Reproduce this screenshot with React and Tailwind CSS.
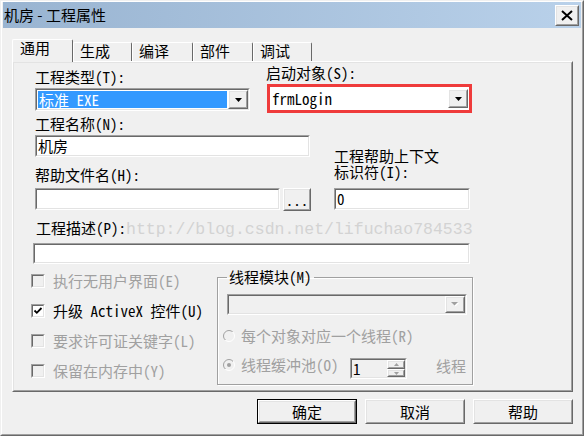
import React from 'react'

const GRAY = 'text-[#a0a0a0]'

const TABS = [
  { name: '通用', cls: 'relative z-10 w-[61px] h-[23px] pl-[7px] bg-[#f0f0f0] border-t border-l border-r border-t-white border-l-white border-r-[#696969] rounded-t-[2px]' },
  { name: '生成', cls: 'mt-[3px] w-[59px] h-[19px] pl-[6px] border-t border-l border-r border-t-white border-l-white border-r-[#696969] rounded-t-[2px]' },
  { name: '编译', cls: 'mt-[3px] w-[61px] h-[19px] pl-[6px] border-t border-l border-r border-t-white border-l-white border-r-[#696969] rounded-t-[2px]' },
  { name: '部件', cls: 'mt-[3px] w-[60px] h-[19px] pl-[6px] border-t border-l border-r border-t-white border-l-white border-r-[#696969] rounded-t-[2px]' },
  { name: '调试', cls: 'mt-[3px] w-[59px] h-[19px] pl-[6px] border-t border-l border-r border-t-white border-l-white border-r-[#696969] rounded-t-[2px]' },
]

function Sunken({ className = '', fill = 'bg-white', children }) {
  return (
    <div className={`border border-t-[#a0a0a0] border-l-[#a0a0a0] border-r-white border-b-white ${className}`}>
      <div className={`h-full flex items-center border border-t-[#696969] border-l-[#696969] border-r-[#e3e3e3] border-b-[#e3e3e3] ${fill}`}>
        {children}
      </div>
    </div>
  )
}

function Raised({ className = '', children }) {
  return (
    <div className={`border border-t-white border-l-white border-r-[#696969] border-b-[#696969] ${className}`}>
      <div className="h-full flex items-center justify-center border border-t-[#e3e3e3] border-l-[#e3e3e3] border-r-[#a0a0a0] border-b-[#a0a0a0] bg-[#f0f0f0]">
        {children}
      </div>
    </div>
  )
}

function DropArrow({ disabled }) {
  if (disabled) {
    return (
      <svg width="8" height="5" viewBox="0 0 8 5">
        <path d="M1 1h7L4.5 4.5z" fill="#fff" />
        <path d="M0 0h7L3.5 3.5z" fill="#a0a0a0" />
      </svg>
    )
  }
  return (
    <svg width="7" height="4" viewBox="0 0 7 4"><path d="M0 0h7L3.5 4z" fill="#000" /></svg>
  )
}

function CheckBox({ checked, disabled, label }) {
  return (
    <div className="flex items-center h-[16px]">
      <Sunken className="w-[14px] h-[14px] shrink-0" fill={disabled ? 'bg-[#f0f0f0]' : 'bg-white'}>
        {checked && (
          <svg width="10" height="10" viewBox="0 0 10 10">
            <path d="M1.5 4.5L3.8 6.8L8.5 2" fill="none" stroke="#000" strokeWidth="1.8" />
          </svg>
        )}
      </Sunken>
      <span className={`ml-[8px] whitespace-nowrap ${disabled ? GRAY : 'text-black'}`}>{label}</span>
    </div>
  )
}

function Radio({ id, dot }) {
  return (
    <svg width="12" height="12" viewBox="0 0 12 12" className="shrink-0">
      <defs>
        <linearGradient id={id} x1="0" y1="0" x2="1" y2="1">
          <stop offset="0.5" stopColor="#a0a0a0" />
          <stop offset="0.5" stopColor="#ffffff" />
        </linearGradient>
      </defs>
      <circle cx="6" cy="6" r="5.5" fill="#f0f0f0" stroke={`url(#${id})`} />
      {dot && <circle cx="6" cy="6" r="2" fill="#a0a0a0" />}
    </svg>
  )
}

export default function App() {
  return (
    <div className="w-[584px] h-[436px] bg-[#f0f0f0] border border-t-[#f0f0f0] border-l-[#f0f0f0] border-r-[#696969] border-b-[#696969] text-[15px] leading-[16px] text-black font-['Noto_Sans_Mono_CJK_SC','Noto_Sans_CJK_SC',sans-serif]">
      <div className="h-full flex flex-col border border-t-white border-l-white border-r-[#a0a0a0] border-b-[#a0a0a0] px-px pb-px">
        {/* title bar */}
        <div className="h-[26px] shrink-0 flex items-center bg-linear-to-r from-[#99b4d1] to-[#b9d1ea] pl-px pr-[2px]">
          <span className="font-['Noto_Sans_CJK_SC',sans-serif]">机房 - 工程属性</span>
          <Raised className="ml-auto w-[24px] h-[21px]">
            <svg width="12" height="11" viewBox="0 0 12 11">
              <path d="M1 1L11 10M11 1L1 10" stroke="#000" strokeWidth="2" />
            </svg>
          </Raised>
        </div>

        {/* tabs */}
        <div className="mt-[11px] ml-[9px] h-[22px] flex items-start">
          {TABS.map(t => (
            <div key={t.name} className={t.cls}>{t.name}</div>
          ))}
        </div>

        {/* tab page */}
        <div className="ml-[9px] w-[561px] h-[331px] border border-t-white border-l-white border-r-[#696969] border-b-[#696969]">
          <div className="h-full flex flex-col border border-t-[#e3e3e3] border-l-[#e3e3e3] border-r-[#a0a0a0] border-b-[#a0a0a0]">
            {/* row: type / startup */}
            <div className="flex mt-[2px]">
              <div className="ml-[21px] mt-[4px] w-[215px] flex flex-col">
                <span>工程类型(T):</span>
                <Sunken className="mt-[3px] w-[215px] h-[23px]">
                  <div className="ml-px h-[17px] w-[189px] bg-[#3399ff] text-white pl-px flex items-center">标准 EXE</div>
                  <Raised className="ml-auto w-[20px] h-[19px]"><DropArrow /></Raised>
                </Sunken>
              </div>
              <div className="ml-[16px] flex flex-col">
                <span>启动对象(S):</span>
                <div className="ml-px mt-[3px] w-[205px] h-[29px] border-[3px] border-[#ef3b3b] bg-white flex items-center pl-[2px] pr-px">
                  <span>frmLogin</span>
                  <Raised className="ml-auto w-[20px] h-[19px]"><DropArrow /></Raised>
                </div>
              </div>
            </div>

            {/* row: name / help */}
            <div className="flex">
              <div className="ml-[21px] w-[276px] flex flex-col">
                <span className="mt-[3px]">工程名称(N):</span>
                <Sunken className="mt-[3px] w-[275px] h-[22px]">
                  <span className="pl-px">机房</span>
                </Sunken>
                <span className="mt-[10px]">帮助文件名(H):</span>
                <div className="mt-[5px] flex items-start">
                  <Sunken className="w-[245px] h-[22px]" />
                  <Raised className="ml-[3px] w-[28px] h-[23px]">...</Raised>
                </div>
              </div>
              <div className="ml-[23px] flex flex-col">
                <span className="mt-[35px]">工程帮助上下文<br />标识符(I):</span>
                <Sunken className="mt-[8px] w-[136px] h-[22px]">
                  <span className="pl-px">0</span>
                </Sunken>
              </div>
            </div>

            {/* row: description */}
            <div className="ml-[19px] flex flex-col">
              <div className="mt-[9px] pl-[3px] flex items-baseline whitespace-nowrap">
                <span>工程描述(P):</span>
                <span className="font-['Liberation_Mono',monospace] text-[16.5px] text-[#d3d3d3]">http://blog.csdn.net/lifuchao784533</span>
              </div>
              <Sunken className="mt-[5px] w-[437px] h-[21px]" />
            </div>

            {/* row: options + threading */}
            <div className="flex items-start">
              <div className="ml-[17px] mt-[9px] w-[186px] flex flex-col gap-[14px]">
                <CheckBox disabled label="执行无用户界面(E)" />
                <CheckBox checked label="升级 ActiveX 控件(U)" />
                <CheckBox disabled label="要求许可证关键字(L)" />
                <CheckBox disabled label="保留在内存中(Y)" />
              </div>
              <fieldset className="mt-[5px] w-[256px] h-[116px] border border-[#a0a0a0] shadow-[inset_1px_1px_0_#fff,1px_1px_0_#fff]">
                <legend className="ml-[9px] px-[2px] leading-[16px]">线程模块(M)</legend>
                <Sunken className="ml-[9px] mt-[9px] w-[240px] h-[21px]" fill="bg-[#f0f0f0]">
                  <Raised className="ml-auto w-[20px] h-[17px]"><DropArrow disabled /></Raised>
                </Sunken>
                <div className="ml-[5px] mt-[13px] h-[16px] flex items-center">
                  <Radio id="r1" />
                  <span className={`ml-[6px] whitespace-nowrap ${GRAY}`}>每个对象对应一个线程(R)</span>
                </div>
                <div className="ml-[5px] mt-[14px] flex items-start">
                  <div className="mt-px"><Radio id="r2" dot /></div>
                  <span className={`ml-[6px] -mt-px w-[109px] whitespace-nowrap ${GRAY}`}>线程缓冲池(O)</span>
                  <Sunken className="w-[57px] h-[21px]" fill="bg-[#f0f0f0]">
                    <span className="pl-px">1</span>
                    <div className="ml-auto w-[18px] h-full flex flex-col">
                      <Raised className="w-full h-[9px]">
                        <svg width="5" height="3" viewBox="0 0 5 3"><path d="M0 3h5L2.5 0z" fill="#a0a0a0" /></svg>
                      </Raised>
                      <Raised className="w-full h-[8px]">
                        <svg width="5" height="3" viewBox="0 0 5 3"><path d="M0 0h5L2.5 3z" fill="#a0a0a0" /></svg>
                      </Raised>
                    </div>
                  </Sunken>
                  <span className={`ml-[29px] ${GRAY}`}>线程</span>
                </div>
              </fieldset>
            </div>
          </div>
        </div>

        {/* dialog buttons */}
        <div className="ml-[9px] mt-[7px] w-[561px] flex justify-end gap-[8px]">
          <div className="w-[100px] h-[25px] border border-black">
            <Raised className="w-full h-full">确定</Raised>
          </div>
          <Raised className="w-[100px] h-[25px]">取消</Raised>
          <Raised className="w-[100px] h-[25px]">帮助</Raised>
        </div>
      </div>
    </div>
  )
}
